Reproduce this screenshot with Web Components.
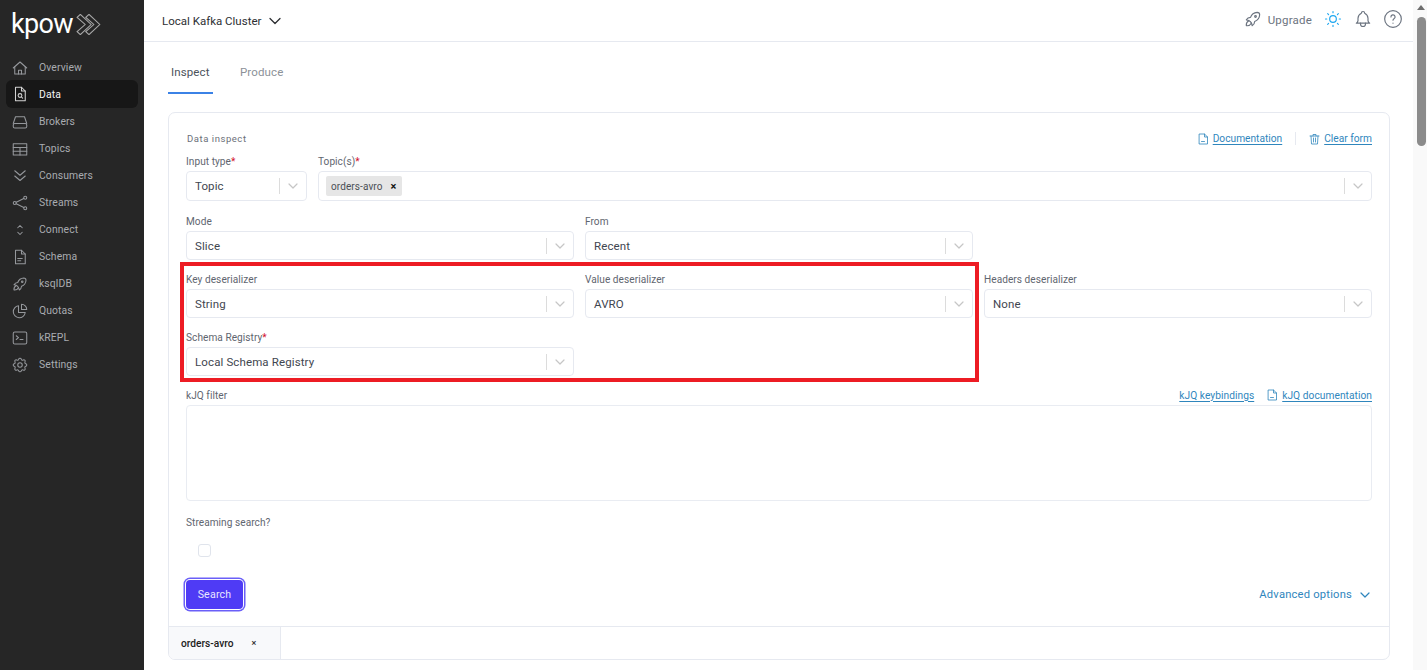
<!DOCTYPE html>
<html>
<head>
<meta charset="utf-8">
<title>Kpow</title>
<style>
  html, body { margin: 0; height: 100%; overflow: hidden; background: #fff; }
  body { font-family: Roboto, "Liberation Sans", sans-serif; display: flex; }
  k-main { flex: 1; min-width: 0; }
  .row { display: grid; gap: 11px; grid-template-columns: repeat(3, 1fr); margin-bottom: 7px; }
  .row.first { grid-template-columns: 121px 1fr; margin-bottom: 8px; }
  .row.first k-select { height: 30px; }
  .sr { grid-column: 1; }
  .kjq-links { display: flex; gap: 13px; align-items: center; }
  .streaming { margin-top: 9px; }
  .bottom { display: flex; justify-content: space-between; align-items: center; margin-top: 23px; }
</style>
</head>
<body>

<template id="nav-item-tpl">
  <style>
    :host { display: flex; align-items: center; height: 27px; margin: 0 6px; padding-left: 5px; gap: 10px; color: #a9acb1; font-size: 10.4px; border-radius: 6px; letter-spacing: .1px; }
    :host([active]) { background: #171717; color: #f4f4f4; height: 28px; margin-top: -1px; }
    ::slotted(svg) { width: 18px; height: 18px; flex: none; fill: none; stroke: currentColor; stroke-width: 1.4; stroke-linecap: round; stroke-linejoin: round; opacity: .85; }
  </style>
  <slot name="icon"></slot><span><slot></slot></span>
</template>

<template id="select-tpl">
  <style>
    :host { display: flex; align-items: center; height: 29px; box-sizing: border-box; border: 1px solid #e6e9f0; border-radius: 4px; background: #fff; font-size: 11.5px; color: #3f4650; letter-spacing: .12px; }
    .val { flex: 1; min-width: 0; padding-left: 8px; display: flex; align-items: center; }
    .sep { width: 1px; height: 16px; background: #dcdcdc; }
    svg { width: 26px; height: 12px; fill: none; stroke: #c6c6c6; stroke-width: 1.2; stroke-linecap: round; stroke-linejoin: round; }
  </style>
  <div class="val"><slot></slot></div><div class="sep"></div>
  <svg viewBox="0 0 26 12"><path d="M9 4l4 4 4-4"/></svg>
</template>

<template id="field-tpl">
  <style>
    :host { display: block; }
    .lab { display: flex; justify-content: space-between; align-items: center; height: 22px; padding-top: 2px; box-sizing: border-box; font-size: 10.1px; color: #5f6670; letter-spacing: .05px; }
    b { color: #d3122a; font-weight: 400; }
  </style>
  <div class="lab"><span id="t"></span><slot name="extra"></slot></div>
  <slot></slot>
</template>

<template id="link-tpl">
  <style>
    :host { display: inline-flex; align-items: center; gap: 4px; color: #2f86bd; font-size: 10.2px; white-space: nowrap; }
    span { text-decoration: underline; text-underline-offset: 2px; }
    ::slotted(svg) { width: 11px; height: 12px; flex: none; fill: none; stroke: currentColor; stroke-width: 1.6; stroke-linecap: round; stroke-linejoin: round; }
  </style>
  <slot name="icon"></slot><span><slot></slot></span>
</template>

<template id="side-tpl">
  <style>
    :host { display: block; width: 144px; flex: none; height: 670px; background: #262626; }
    .logo { display: flex; align-items: center; height: 54px; padding: 0 0 6px 11px; box-sizing: border-box; color: #fff; font: 400 27px/1 Roboto, sans-serif; letter-spacing: -.7px; }
    .logo svg { width: 26px; height: 21px; margin: 0 0 0 3px; fill: none; stroke: #a8a8a8; stroke-width: 1.1; stroke-linejoin: round; }
    nav { display: block; }
  </style>
  <div class="logo"><span>kpow</span>
    <svg viewBox="0 0 24 22" preserveAspectRatio="none"><path d="M1 3.5l3-3 10 10.500-10 10.500-3-3 7.500-7.500z"/><path d="M9 3.500l3-3 10 10.500-10 10.500-3-3 7.500-7.500z"/></svg>
  </div>
  <nav><slot></slot></nav>
</template>

<template id="top-tpl">
  <style>
    :host { display: flex; align-items: center; height: 41px; border-bottom: 1px solid #e6e9f0; padding: 0 10px 0 18px; color: #2d2f33; }
    .cluster { font-size: 11.5px; }
    .chev { width: 14px; height: 10px; margin-left: 7px; fill: none; stroke: #2d2f33; stroke-width: 1.3; stroke-linecap: round; stroke-linejoin: round; }
    .sp { flex: 1; }
    .up { color: #6c7480; font-size: 11.5px; letter-spacing: .2px; margin: -2px 11px 0 5px; }
    .i { width: 20px; height: 20px; margin-top: -3px; fill: none; stroke: #6c7480; stroke-width: 1.4; stroke-linecap: round; stroke-linejoin: round; }
    .sun { stroke: #1ea7f0; margin-right: 10px; }
    .bell { margin-right: 10px; }
  </style>
  <span class="cluster">Local Kafka Cluster</span>
  <svg class="chev" viewBox="0 0 14 10"><path d="M2 2.500l5 5 5-5"/></svg>
  <span class="sp"></span>
  <svg class="i" viewBox="0 0 24 24"><path d="M4 13a8 8 0 0 1 7 7 6 6 0 0 0 3-5 9 9 0 0 0 6-8 3 3 0 0 0-3-3 9 9 0 0 0-8 6 6 6 0 0 0-5 3"/><path d="M7 14a6 6 0 0 0-3 6 6 6 0 0 0 6-3"/><circle cx="15" cy="9" r="1"/></svg>
  <span class="up">Upgrade</span>
  <svg class="i sun" viewBox="0 0 24 24"><circle cx="12" cy="12" r="4"/><path d="M3 12h1.500M19.500 12H21M12 3v1.500M12 19.500V21M5.600 5.600l1.100 1.100M17.300 17.300l1.100 1.100M5.600 18.400l1.100-1.100M17.300 6.700l1.100-1.100"/></svg>
  <svg class="i bell" viewBox="0 0 24 24"><path d="M10 5a2 2 0 1 1 4 0 7 7 0 0 1 4 6v3a4 4 0 0 0 2 3H4a4 4 0 0 0 2-3v-3a7 7 0 0 1 4-6"/><path d="M9 17v1a3 3 0 0 0 6 0v-1"/></svg>
  <svg class="i" viewBox="0 0 24 24"><circle cx="12" cy="12" r="10"/><path d="M9.500 9.500a2.500 2.500 0 1 1 3.700 2.200c-.8.500-1.200 1-1.200 1.800"/><path d="M12 17v.01"/></svg>
</template>

<template id="tabs-tpl">
  <style>
    :host { display: flex; gap: 24px; padding: 12px 0 18px 24px; font-size: 11.5px; letter-spacing: .12px; color: #8c9198; }
    div { height: 40px; padding: 0 3px 4px; display: flex; align-items: center; box-sizing: border-box; }
    .on { color: #4c535c; border-bottom: 2px solid #3b82e6; width: 45px; padding-bottom: 2px; }
  </style>
  <div class="on">Inspect</div><div>Produce</div>
</template>

<template id="card-tpl">
  <style>
    :host { display: block; margin: 0 23px 0 24px; border: 1px solid #e6e9f0; border-radius: 7px; height: 548px; box-sizing: border-box; position: relative; overflow: hidden; }
    .body { padding: 15px 17px 0 17px; }
    .foot { display: flex; position: absolute; left: 0; right: 0; bottom: 0; height: 33px; border-top: 1px solid #e6e9f0; box-sizing: border-box; }
    .t { width: 112px; background: #f8f9fb; border-right: 1px solid #e6e9f0; display: flex; align-items: center; padding-left: 12px; box-sizing: border-box; font-size: 10.2px; font-weight: 500; color: #1c1c1c; }
    .x { margin-left: 18px; font-size: 9px; color: #333; }
    .head { display: flex; justify-content: space-between; align-items: center; height: 21px; }
    .ttl { font-size: 9.5px; color: #6b7079; letter-spacing: .55px; padding-left: 1px; }
    .acts { display: flex; align-items: center; gap: 13px; }
  </style>
  <div class="body">
    <div class="head"><span class="ttl">Data inspect</span><div class="acts"><slot name="actions"></slot></div></div>
    <slot></slot>
  </div>
  <div class="foot"><div class="t">orders-avro<span class="x">×</span></div></div>
</template>

<template id="chip-tpl">
  <style>
    :host { display: inline-flex; align-items: center; height: 20px; margin-left: -1px; padding: 0 5px 0 5px; background: #e6e6e6; border-radius: 2px; font-size: 10px; letter-spacing: .1px; color: #4b4f55; }
    b { margin-left: 8px; color: #111; font-size: 11px; font-weight: 700; }
  </style>
  <slot></slot><b>×</b>
</template>

<template id="btn-tpl">
  <style>
    :host { display: inline-flex; align-items: center; justify-content: center; width: 57px; height: 29px; background: #4f3bf5; color: #e9e7ff; border-radius: 4px; font-size: 10.6px; letter-spacing: .2px; box-shadow: 0 0 0 1px #fff, 0 0 0 2.500px #6a5ff8; }
  </style>
  <slot></slot>
</template>

<template id="area-tpl">
  <style>:host { display: block; height: 96px; border: 1px solid #e9ecf2; border-radius: 4px; box-sizing: border-box; }</style>
</template>

<template id="check-tpl">
  <style>:host { display: block; width: 13px; height: 13px; margin: 12px 0 0 12px; border: 1px solid #e0e4ec; border-radius: 3px; box-sizing: border-box; }</style>
</template>

<template id="scroll-tpl">
  <style>
    :host { display: block; width: 14px; flex: none; height: 670px; background: #f9f9f9; }
    .up { width: 0; height: 0; margin: 5px 0 0 4px; border: 4px solid transparent; border-top: 0; border-bottom: 5px solid #6e6e6e; }
    .th { width: 9px; height: 129px; margin: 7px 0 0 4px; background: #8b8b8b; border-radius: 5px; }
  </style>
  <div class="up"></div><div class="th"></div>
</template>

<template id="mark-tpl">
  <style>:host { position: absolute; left: 180px; top: 262px; width: 799px; height: 120px; box-sizing: border-box; border: 4px solid #ed1c24; pointer-events: none; }</style>
</template>

<k-side>
  <k-nav><svg slot="icon" viewBox="0 0 24 24"><path d="M3 12l9-8 9 8"/><path d="M5 10.500V20h14v-9.500"/><path d="M10 20v-5h4v5"/></svg>Overview</k-nav>
  <k-nav active><svg slot="icon" viewBox="0 0 24 24"><path d="M6 3h8l5 5v13H6z"/><path d="M14 3v5h5"/><circle cx="12" cy="14" r="2.500"/><path d="M14 16l1.500 1.500"/></svg>Data</k-nav>
  <k-nav><svg slot="icon" viewBox="0 0 24 24"><path d="M3 14l3-9h12l3 9"/><rect x="3" y="14" width="18" height="6" rx="2"/></svg>Brokers</k-nav>
  <k-nav><svg slot="icon" viewBox="0 0 24 24"><rect x="3" y="5" width="18" height="15"/><path d="M3 10h18M3 15h18M12 10v10"/></svg>Topics</k-nav>
  <k-nav><svg slot="icon" viewBox="0 0 24 24"><path d="M5 5l7 6 7-6M5 12l7 6 7-6"/></svg>Consumers</k-nav>
  <k-nav><svg slot="icon" viewBox="0 0 24 24"><circle cx="5" cy="12" r="2"/><circle cx="19" cy="5" r="2"/><circle cx="19" cy="19" r="2"/><path d="M7 11l10-5M7 13l10 5"/></svg>Streams</k-nav>
  <k-nav><svg slot="icon" viewBox="0 0 24 24"><path d="M9 9l3-3 3 3M9 15l3 3 3-3"/></svg>Connect</k-nav>
  <k-nav><svg slot="icon" viewBox="0 0 24 24"><path d="M6 3h8l5 5v13H6z"/><path d="M14 3v5h5"/><path d="M9 14h6M9 17h4"/></svg>Schema</k-nav>
  <k-nav><svg slot="icon" viewBox="0 0 24 24"><path d="M4 13a8 8 0 0 1 7 7 6 6 0 0 0 3-5 9 9 0 0 0 6-8 3 3 0 0 0-3-3 9 9 0 0 0-8 6 6 6 0 0 0-5 3"/><path d="M7 14a6 6 0 0 0-3 6 6 6 0 0 0 6-3"/><circle cx="15" cy="9" r="1"/></svg>ksqlDB</k-nav>
  <k-nav><svg slot="icon" viewBox="0 0 24 24"><path d="M10 5a8 8 0 1 0 9 9h-9z"/><path d="M14 10V3a7 7 0 0 1 7 7z"/></svg>Quotas</k-nav>
  <k-nav><svg slot="icon" viewBox="0 0 24 24"><rect x="3" y="4" width="18" height="16" rx="2"/><path d="M7 9l3 2.500-3 2.500M12 14h4"/></svg>kREPL</k-nav>
  <k-nav><svg slot="icon" viewBox="0 0 24 24"><path d="M10.300 4.300c.4-1.700 3-1.700 3.400 0a1.700 1.700 0 0 0 2.600 1.100c1.500-.9 3.300.8 2.400 2.400a1.700 1.700 0 0 0 1 2.500c1.800.4 1.800 3 0 3.400a1.700 1.700 0 0 0-1 2.600c.9 1.500-.9 3.300-2.400 2.400a1.700 1.700 0 0 0-2.600 1c-.4 1.800-3 1.800-3.400 0a1.700 1.700 0 0 0-2.600-1c-1.500.9-3.300-.9-2.400-2.400a1.700 1.700 0 0 0-1-2.600c-1.800-.4-1.800-3 0-3.400a1.700 1.700 0 0 0 1-2.500c-.9-1.600.9-3.300 2.400-2.400a1.700 1.700 0 0 0 2.600-1.100"/><circle cx="12" cy="12" r="3"/></svg>Settings</k-nav>
</k-side>

<k-main>
  <k-top></k-top>
  <k-tabs></k-tabs>
  <k-card>
    <k-link slot="actions"><svg slot="icon" viewBox="0 0 22 24"><path d="M3 2h10l6 6v14H3z"/><path d="M13 2v6h6M7 17h6"/></svg>Documentation</k-link>
    <div slot="actions" style="width:1px;height:13px;background:#e6e9f0"></div>
    <k-link slot="actions"><svg slot="icon" viewBox="0 0 22 24"><path d="M2 6h18M8 6V3h6v3M4 6l1 16h12l1-16M9 10v8M13 10v8"/></svg>Clear form</k-link>

    <div class="row first">
      <k-field label="Input type" required><k-select>Topic</k-select></k-field>
      <k-field label="Topic(s)" required><k-select><k-chip>orders-avro</k-chip></k-select></k-field>
    </div>
    <div class="row">
      <k-field label="Mode"><k-select>Slice</k-select></k-field>
      <k-field label="From"><k-select>Recent</k-select></k-field>
    </div>
    <div class="row">
      <k-field label="Key deserializer"><k-select>String</k-select></k-field>
      <k-field label="Value deserializer"><k-select>AVRO</k-select></k-field>
      <k-field label="Headers deserializer"><k-select>None</k-select></k-field>
    </div>
    <div class="row">
      <k-field class="sr" label="Schema Registry" required><k-select>Local Schema Registry</k-select></k-field>
    </div>
    <k-field label="kJQ filter">
      <div slot="extra" class="kjq-links">
        <k-link>kJQ keybindings</k-link>
        <k-link><svg slot="icon" viewBox="0 0 22 24"><path d="M3 2h10l6 6v14H3z"/><path d="M13 2v6h6M7 17h6"/></svg>kJQ documentation</k-link>
      </div>
      <k-area></k-area>
    </k-field>
    <k-field class="streaming" label="Streaming search?"><k-check></k-check></k-field>
    <div class="bottom">
      <k-button>Search</k-button>
      <k-adv></k-adv>
    </div>
  </k-card>
</k-main>

<k-scroll></k-scroll>
<k-mark></k-mark>

<script>
  class TplElement extends HTMLElement {
    constructor() {
      super();
      const tpl = document.getElementById(this.constructor.tpl);
      this.attachShadow({ mode: 'open' }).appendChild(tpl.content.cloneNode(true));
    }
  }

  const simple = {
    'k-side': 'side-tpl',
    'k-nav': 'nav-item-tpl',
    'k-top': 'top-tpl',
    'k-tabs': 'tabs-tpl',
    'k-card': 'card-tpl',
    'k-select': 'select-tpl',
    'k-chip': 'chip-tpl',
    'k-link': 'link-tpl',
    'k-button': 'btn-tpl',
    'k-area': 'area-tpl',
    'k-check': 'check-tpl',
    'k-scroll': 'scroll-tpl',
    'k-mark': 'mark-tpl',
  };

  class Field extends TplElement {
    static tpl = 'field-tpl';
    connectedCallback() {
      const t = this.shadowRoot.getElementById('t');
      t.textContent = this.getAttribute('label');
      if (this.hasAttribute('required')) {
        const star = document.createElement('b');
        star.textContent = '*';
        t.appendChild(star);
      }
    }
  }
  customElements.define('k-field', Field);

  class Advanced extends HTMLElement {
    constructor() {
      super();
      this.attachShadow({ mode: 'open' }).innerHTML = `
        <style>
          :host { display: inline-flex; align-items: center; gap: 8px; padding-right: 2px; color: #2f86bd; font-size: 11.2px; letter-spacing: .2px; }
          svg { width: 10px; height: 8px; fill: none; stroke: currentColor; stroke-width: 1.2; stroke-linecap: round; stroke-linejoin: round; }
        </style>
        Advanced options<svg viewBox="0 0 10 8"><path d="M1 2l4 4 4-4"/></svg>`;
    }
  }
  customElements.define('k-adv', Advanced);

  for (const [tag, tpl] of Object.entries(simple)) {
    customElements.define(tag, class extends TplElement { static tpl = tpl; });
  }
</script>
</body>
</html>
